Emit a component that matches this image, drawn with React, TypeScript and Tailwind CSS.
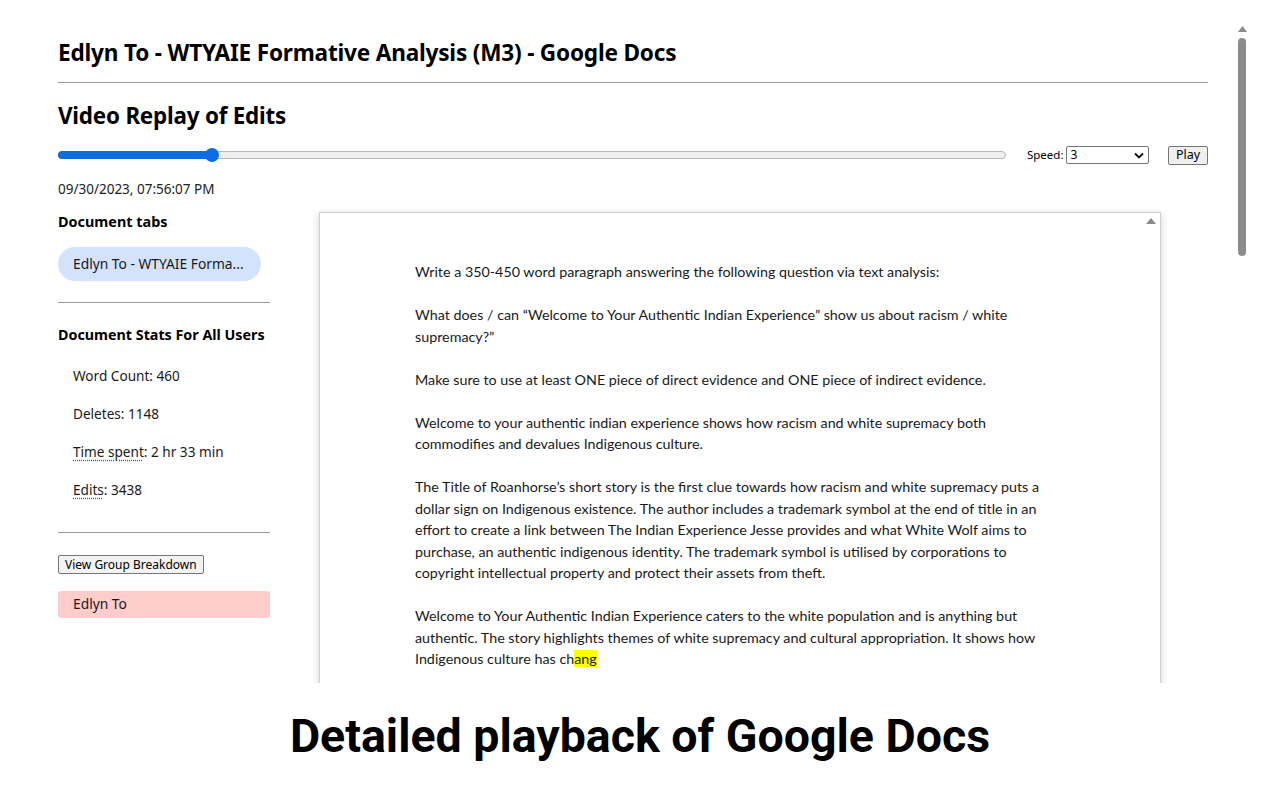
import React from "react";

const ui = { fontFamily: '"Noto Sans", "Open Sans", sans-serif' };
const doc = { fontFamily: 'Lato, "Noto Sans", sans-serif' };

function Slider() {
  return (
    <div className="relative h-[14px] w-[952px] flex items-center">
      <div className="absolute left-0 right-0 h-[8px] rounded-full border border-[#b8b8b8] bg-[#efefef]" />
      <div className="absolute left-0 w-[154px] h-[8px] rounded-full bg-[#0b6ce6]" />
      <div className="absolute left-[147px] w-[14px] h-[14px] rounded-full bg-[#0b6ce6]" />
    </div>
  );
}

const paragraphs: React.ReactNode[][] = [
  ["Write a 350-450 word paragraph answering the following question via text analysis:"],
  [
    "What does / can \u201cWelcome to Your Authentic Indian Experience\u201d show us about racism / white",
    "supremacy?\u201d",
  ],
  ["Make sure to use at least ONE piece of direct evidence and ONE piece of indirect evidence."],
  [
    "Welcome to your authentic indian experience shows how racism and white supremacy both",
    "commodifies and devalues Indigenous culture.",
  ],
  [
    "The Title of Roanhorse\u2019s short story is the first clue towards how racism and white supremacy puts a",
    "dollar sign on Indigenous existence. The author includes a trademark symbol at the end of title in an",
    "effort to create a link between The Indian Experience Jesse provides and what White Wolf aims to",
    "purchase, an authentic indigenous identity. The trademark symbol is utilised by corporations to",
    "copyright intellectual property and protect their assets from theft.",
  ],
  [
    "Welcome to Your Authentic Indian Experience caters to the white population and is anything but",
    "authentic. The story highlights themes of white supremacy and cultural appropriation. It shows how",
    <>
      Indigenous culture has ch<span className="bg-[#ffff00]">ang</span>
    </>,
  ],
];

export default function App() {
  return (
    <div className="w-[1280px] h-[800px] bg-white overflow-hidden relative text-[#111]">
      {/* browser content */}
      <div className="h-[683px] overflow-hidden relative">
        <div className="pl-[58px] w-[1208px]" style={ui}>
          <h1 className="pt-[38px] text-[22.6px] leading-[30px] font-bold text-black tracking-[-0.2px]">
            Edlyn To - WTYAIE Formative Analysis (M3) - Google Docs
          </h1>
          <div className="mt-[14px] h-px bg-[#9a9a9a]" />
          <h2 className="mt-[18px] text-[22.4px] leading-[30px] font-bold text-black tracking-[-0.2px]">
            Video Replay of Edits
          </h2>
          <div className="mt-[14px] h-[20px] flex items-center">
            <Slider />
            <span className="ml-[21px] text-[11.5px] text-black">Speed:</span>
            <div className="ml-[3px] w-[83px] h-[18px] border border-[#767676] rounded-[2px] flex items-center justify-between pl-[3px] pr-[4px] text-[12px] text-black">
              <span>3</span>
              <svg width="10" height="7" viewBox="0 0 10 7">
                <path d="M1 1.5 L5 5.5 L9 1.5" stroke="#111" strokeWidth="1.8" fill="none" />
              </svg>
            </div>
            <div className="ml-[19px] w-[40px] h-[19px] border border-[#767676] rounded-[2px] bg-[#efefef] flex items-center justify-center text-[12.5px] text-black">
              Play
            </div>
          </div>
          <div className="mt-[14px] text-[13.5px] leading-[20px] text-[#222]">09/30/2023, 07:56:07 PM</div>

          <div className="mt-[13px] flex items-start">
            {/* left column */}
            <div className="w-[212px] shrink-0">
              <div className="text-[14.4px] leading-[20px] font-bold text-black">Document tabs</div>
              <div className="mt-[15px] w-[203px] h-[34px] rounded-full bg-[#d3e3fd] flex items-center pl-[15px] text-[13.8px] text-[#1a1a1a]">
                Edlyn To - WTYAIE Forma...
              </div>
              <div className="mt-[21px] h-px bg-[#9a9a9a]" />
              <div className="mt-[22px] text-[14.3px] leading-[20px] font-bold text-black">
                Document Stats For All Users
              </div>
              <div className="mt-[21px] pl-[15px] flex flex-col gap-[18px] text-[13.6px] leading-[20px] text-[#1a1a1a]">
                <div>Word Count: 460</div>
                <div>Deletes: 1148</div>
                <div>
                  <span className="underline decoration-dotted decoration-[#555] underline-offset-[3px]">Time spent</span>: 2 hr 33 min
                </div>
                <div>
                  <span className="underline decoration-dotted decoration-[#555] underline-offset-[3px]">Edits</span>: 3438
                </div>
              </div>
              <div className="mt-[32px] h-px bg-[#9a9a9a]" />
              <div className="mt-[22px] inline-flex h-[19px] px-[6px] items-center border border-[#767676] rounded-[2px] bg-[#f3f3f3] text-[12px] text-black">
                View Group Breakdown
              </div>
              <div className="mt-[16px] h-[27px] rounded-[3px] bg-[#ffcccc] flex items-center pl-[15px] text-[13.8px] text-[#1a1a1a]">
                Edlyn To
              </div>
            </div>

            {/* document panel */}
            <div className="ml-[49px] w-[842px] h-[500px] border border-[#d0d0d0] shadow-[0_2px_8px_rgba(0,0,0,0.18)] bg-white relative">
              <svg className="absolute right-[4px] top-[5px]" width="10" height="6" viewBox="0 0 10 6">
                <path d="M0 6 L5 0 L10 6 Z" fill="#8a8a8a" />
              </svg>
              <div className="pl-[95px] pt-[48px] text-[14.3px] leading-[21.5px] text-[#1a1a1a]" style={doc}>
                {paragraphs.map((lines, i) => (
                  <div key={i} className={i > 0 ? "mt-[21.5px]" : ""}>
                    {lines.map((l, j) => (
                      <div key={j} className="whitespace-nowrap">
                        {l}
                      </div>
                    ))}
                  </div>
                ))}
              </div>
            </div>
          </div>
        </div>

        {/* page scrollbar */}
        <svg className="absolute left-[1238px] top-[26px]" width="9" height="6" viewBox="0 0 9 6">
          <path d="M0 6 L4.5 0 L9 6 Z" fill="#8a8a8a" />
        </svg>
        <div className="absolute left-[1238px] top-[38px] w-[8px] h-[218px] rounded-full bg-[#8c8c8c]" />
      </div>

      {/* caption */}
      <div className="h-[117px] flex items-center justify-center">
        <div
          className="text-[46.5px] font-bold text-black leading-none -mt-[10px]"
          style={{ fontFamily: 'Roboto, "Noto Sans", sans-serif' }}
        >
          Detailed playback of Google Docs
        </div>
      </div>
    </div>
  );
}
